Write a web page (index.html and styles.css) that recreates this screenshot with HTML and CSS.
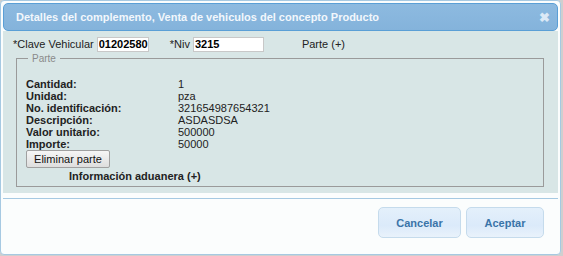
FILE: index.html
```html
<!DOCTYPE html>
<html lang="es">
<head>
  <meta charset="UTF-8" />
  <title>Detalles del complemento</title>
  <link rel="stylesheet" href="styles.css">
</head>
<body>
  <div class="dialog">
    <div class="titlebar">
      <span class="title">Detalles del complemento, Venta de vehiculos del concepto Producto</span>
      <span class="close">&#10006;</span>
    </div>

    <div class="content">
      <div class="toprow">
        <label>*Clave Vehicular</label>
        <input class="inp inp-clave" type="text" value="01202580">
        <label class="lbl-niv">*Niv</label>
        <input class="inp inp-niv" type="text" value="3215">
        <span class="parte-link">Parte (+)</span>
      </div>

      <fieldset class="parte">
        <legend>Parte</legend>
        <div class="datos">
          <div class="lbl">Cantidad:</div><div>1</div>
          <div class="lbl">Unidad:</div><div>pza</div>
          <div class="lbl">No. identificación:</div><div>321654987654321</div>
          <div class="lbl">Descripción:</div><div>ASDASDSA</div>
          <div class="lbl">Valor unitario:</div><div>500000</div>
          <div class="lbl">Importe:</div><div>50000</div>
        </div>
        <button class="btn-eliminar">Eliminar parte</button>
        <div class="aduana">Información aduanera (+)</div>
      </fieldset>
    </div>

    <div class="buttonpane">
      <button class="btn btn-cancel">Cancelar</button>
      <button class="btn btn-ok">Aceptar</button>
    </div>
  </div>
</body>
</html>
```

FILE: styles.css
```css
body {
  margin: 0;
  background-color: #cfcfcf;
  font-family: "Liberation Sans", Arial, sans-serif;
  font-size: 11px;
  color: #222;
}
.dialog {
  width: 555px;
  height: 249px;
  padding: 2px;
  border: 1px solid #a6c9e2;
  border-radius: 4px;
  background-color: #fbfdfd;
  display: flex;
  flex-direction: column;
}
.titlebar {
  height: 26px;
  border: 1px solid #5a9fd6;
  border-radius: 5px;
  background: linear-gradient(#8dbae0, #84b3db);
  display: flex;
  align-items: center;
  justify-content: space-between;
  padding: 0 7px 0 12px;
}
.title {
  color: #f2f7fc;
  font-weight: bold;
  font-size: 11px;
}
.close {
  color: #dce9f6;
  font-size: 13px;
  font-weight: bold;
}
.content {
  background-color: #d8e6e6;
  padding: 5px 10px 6px 10px;
  height: 151px;
}
.toprow {
  display: flex;
  align-items: center;
  height: 16px;
}
.inp {
  font-family: "Liberation Sans", Arial, sans-serif;
  font-size: 11px;
  font-weight: bold;
  color: #000;
  border: 1px solid #c8c8c8;
  background: #fff;
  height: 15px;
  padding: 0 0 0 1px;
  box-sizing: border-box;
  margin: 0;
}
.inp-clave {
  width: 52px;
  margin-left: 3px;
}
.lbl-niv {
  margin-left: 21px;
}
.inp-niv {
  width: 71px;
  margin-left: 3px;
}
.parte-link {
  margin-left: 38px;
}
.parte {
  margin: 1px 0 0 3px;
  width: 528px;
  box-sizing: border-box;
  border: 1px solid #9a9a9a;
  padding: 14px 9px 4px 9px;
  height: 134px;
}
.parte legend {
  color: #8a8a8a;
  font-size: 10px;
  padding: 0 4px;
  margin-left: 2px;
}
.datos {
  display: grid;
  grid-template-columns: 152px 1fr;
  line-height: 12px;
}
.lbl {
  font-weight: bold;
}
.btn-eliminar {
  font-family: "Liberation Sans", Arial, sans-serif;
  font-size: 11px;
  color: #111;
  margin: 0;
  height: 18px;
  width: 84px;
  padding: 0;
  border: 1px solid #a0a0a0;
  border-radius: 2px;
  background: linear-gradient(#f6f6f6, #dedede);
}
.aduana {
  font-weight: bold;
  margin: 1px 0 0 43px;
  line-height: 14px;
}
.buttonpane {
  margin-top: 5px;
  border-top: 1px solid #a6c9e2;
  display: flex;
  justify-content: flex-end;
  gap: 5px;
  padding: 8px 14px 0 0;
}
.btn {
  font-family: "Liberation Sans", Arial, sans-serif;
  font-size: 11px;
  font-weight: bold;
  color: #3a74a8;
  height: 31px;
  border: 1px solid #c5dbec;
  border-radius: 5px;
  background: linear-gradient(#e4f0fb, #dbeafa 60%, #e9f2fb);
  padding: 0;
}
.btn-cancel {
  width: 83px;
}
.btn-ok {
  width: 78px;
}
```
